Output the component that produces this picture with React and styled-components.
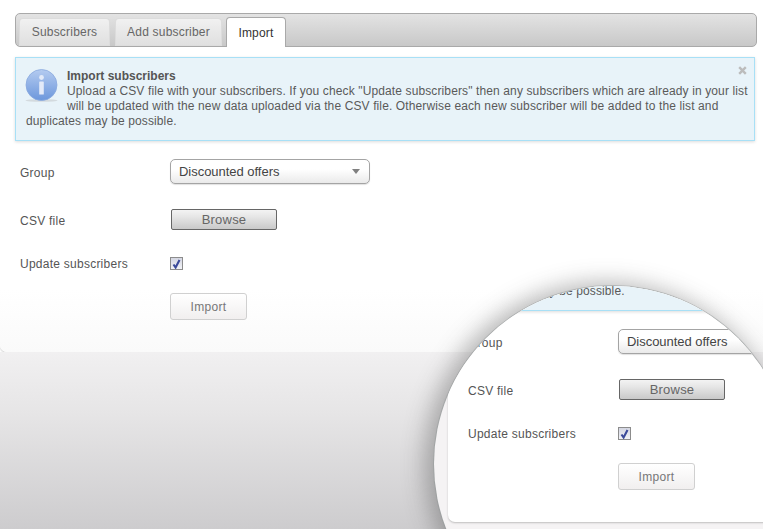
import React from "react";
import styled, { createGlobalStyle } from "styled-components";

const GlobalStyle = createGlobalStyle`
  html, body {
    margin: 0;
    padding: 0;
    background: #fff;
  }
  * {
    box-sizing: border-box;
  }
`;

const Page = styled.div`
  position: relative;
  display: flex;
  flex-direction: column;
  width: 763px;
  height: 529px;
  overflow: hidden;
  font-family: "Liberation Sans", Arial, sans-serif;
  font-size: 12px;
  color: #555;
`;

const Panel = styled.div`
  flex: none;
  width: 100%;
  height: 352px;
  padding: 13px 6px 0 15px;
  border-bottom-left-radius: 7px;
  background: ${(p) => (p.$flat ? "#fff" : "linear-gradient(#fff 0, #fff 290px, #fafafa 100%)")};
  box-shadow: 0 1px 2px rgba(0, 0, 0, 0.22);
`;

const Floor = styled.div`
  flex: 1;
  background: linear-gradient(#f1f0f1, #e6e5e6 35%, #cdcccE);
`;

const TabBar = styled.div`
  display: flex;
  align-items: flex-end;
  height: 34px;
  padding: 0 0 0 3px;
  border: 1px solid #a9a9a9;
  border-radius: 5px;
  background: linear-gradient(#e3e3e3, #c8c8c8);
`;

const Tab = styled.div`
  display: flex;
  align-items: center;
  justify-content: center;
  width: ${(p) => p.$width}px;
  height: ${(p) => (p.$active ? 30 : 28)}px;
  margin-right: ${(p) => p.$after || 0}px;
  margin-bottom: ${(p) => (p.$active ? -1 : 0)}px;
  padding-top: ${(p) => (p.$active ? 1 : 0)}px;
  border: 1px solid ${(p) => (p.$active ? "#a9a9a9" : "#dcdcdc")};
  border-bottom: ${(p) => (p.$active ? "none" : "1px solid #ddd")};
  border-radius: 4px 4px 0 0;
  background: ${(p) => (p.$active ? "#fff" : "linear-gradient(#f1f1f1, #e8e8e8 50%, #e0e0e0)")};
  color: ${(p) => (p.$active ? "#333" : "#666")};
  letter-spacing: 0.2px;
`;

const Notice = styled.div`
  position: relative;
  width: 740px;
  height: 84px;
  margin-top: 10px;
  padding: 11px 2px 0 10px;
  border: 1px solid #a8e0f6;
  background: #e8f3f9;
  box-shadow: 0 1px 3px rgba(0, 0, 0, 0.14);
  line-height: 15px;
  letter-spacing: 0.12px;
  color: #5a5a5a;
`;

const InfoIcon = styled.svg`
  float: left;
  width: 33px;
  height: 33px;
  margin: 0 9px 0 -1px;
`;

const NoticeTitle = styled.div`
  font-weight: bold;
  letter-spacing: 0;
  color: #555;
`;

const CloseIcon = styled.svg`
  position: absolute;
  top: 8px;
  right: 7px;
  width: 9px;
  height: 9px;
`;

const Form = styled.div`
  display: flex;
  flex-direction: column;
  padding: 18px 0 0 5px;
`;

const Row = styled.div`
  display: flex;
  align-items: center;
  height: ${(p) => p.$height}px;
  margin-bottom: ${(p) => p.$gap}px;
`;

const Label = styled.div`
  flex: none;
  width: 150px;
  padding-top: ${(p) => p.$nudge || 0}px;
  letter-spacing: 0.25px;
  color: #555;
`;

const Select = styled.div`
  display: flex;
  align-items: center;
  justify-content: space-between;
  width: 200px;
  height: 25px;
  padding: 0 9px 0 8px;
  border: 1px solid #a4a4a4;
  border-radius: 5px;
  background: linear-gradient(#fff, #fff 40%, #eaeaea);
  box-shadow: 0 1px 1px rgba(0, 0, 0, 0.12);
  font-size: 13px;
  letter-spacing: -0.03px;
  color: #444;
`;

const Caret = styled.span`
  width: 0;
  height: 0;
  border-left: 4px solid transparent;
  border-right: 4px solid transparent;
  border-top: 5px solid #808080;
`;

const BrowseButton = styled.div`
  display: flex;
  align-items: center;
  justify-content: center;
  width: 106px;
  height: 21px;
  margin-left: 1px;
  border: 1px solid #666;
  border-radius: 2px;
  background: linear-gradient(#f3f3f3, #e6e6e6 35%, #c9c9c9);
  font-size: 13px;
  letter-spacing: 0.2px;
  color: #666;
  padding-bottom: 1px;
`;

const CheckBox = styled.span`
  display: flex;
  align-items: center;
  justify-content: center;
  width: 13px;
  height: 13px;
  border: 1px solid #8c8c8c;
  background: linear-gradient(#d4d6e2, #f2f3f7);
`;

const SubmitButton = styled.div`
  display: flex;
  align-items: center;
  justify-content: center;
  width: 77px;
  height: 27px;
  border: 1px solid #d0d0d0;
  border-radius: 3px;
  background: linear-gradient(#fff, #f1efef);
  letter-spacing: 0.3px;
  color: #777;
`;

const Lens = styled.div`
  position: absolute;
  left: 434px;
  top: 286px;
  width: 356px;
  height: 356px;
  border-radius: 50%;
  overflow: hidden;
  background: #f5f3f4;
  box-shadow: 0 0 0 1px rgba(150, 155, 155, 0.55), -6px 0 22px 4px rgba(70, 70, 70, 0.38);
`;

const LensContent = styled.div`
  position: absolute;
  left: 14px;
  top: -116px;
  width: 763px;
  height: 529px;
  font-family: "Liberation Sans", Arial, sans-serif;
  font-size: 12px;
  color: #555;
`;

function Content({ flat }) {
  const fillId = flat ? "infoFillLens" : "infoFill";
  return (
    <Panel $flat={flat}>
      <TabBar>
        <Tab $width={91} $after={5}>Subscribers</Tab>
        <Tab $width={107} $after={4}>Add subscriber</Tab>
        <Tab $width={60} $active>Import</Tab>
      </TabBar>
      <Notice>
        <InfoIcon viewBox="0 0 33 33">
          <defs>
            <linearGradient id={fillId} x1="0" y1="0" x2="0" y2="1">
              <stop offset="0" stopColor="#b4cbf0" />
              <stop offset="1" stopColor="#6c97dc" />
            </linearGradient>
          </defs>
          <ellipse cx="16.5" cy="31.5" rx="16" ry="1.3" fill="#d3dade" />
          <circle cx="16.5" cy="16" r="15.5" fill={`url(#${fillId})`} stroke="#8aaade" strokeWidth="0.8" />
          <circle cx="16.5" cy="8.5" r="2.4" fill="#e3eaf8" />
          <rect x="14.2" y="12.5" width="4.6" height="13" rx="0.6" fill="#e3eaf8" />
        </InfoIcon>
        <CloseIcon viewBox="0 0 9 9">
          <path d="M1.2 1.2 7.8 7.8M7.8 1.2 1.2 7.8" stroke="#bcbcbc" strokeWidth="2.4" />
        </CloseIcon>
        <NoticeTitle>Import subscribers</NoticeTitle>
        Upload a CSV file with your subscribers. If you check "Update subscribers" then any subscribers which are already in your list will be updated with the new data uploaded via the CSV file. Otherwise each new subscriber will be added to the list and duplicates may be possible.
      </Notice>
      <Form>
        <Row $height={25} $gap={25}>
          <Label $nudge={2}>Group</Label>
          <Select>
            Discounted offers
            <Caret />
          </Select>
        </Row>
        <Row $height={21} $gap={27}>
          <Label $nudge={2}>CSV file</Label>
          <BrowseButton>Browse</BrowseButton>
        </Row>
        <Row $height={13} $gap={23}>
          <Label>Update subscribers</Label>
          <CheckBox>
            <svg width="9" height="10" viewBox="0 0 9 10">
              <path d="M1.5 5.5 3.6 8.5 7.5 1" fill="none" stroke="#3b4a9a" strokeWidth="2.1" />
            </svg>
          </CheckBox>
        </Row>
        <Row $height={27} $gap={0}>
          <Label />
          <SubmitButton>Import</SubmitButton>
        </Row>
      </Form>
    </Panel>
  );
}

export default function App() {
  return (
    <Page>
      <GlobalStyle />
      <Content />
      <Floor />
      <Lens>
        <LensContent>
          <Content flat />
        </LensContent>
      </Lens>
    </Page>
  );
}
